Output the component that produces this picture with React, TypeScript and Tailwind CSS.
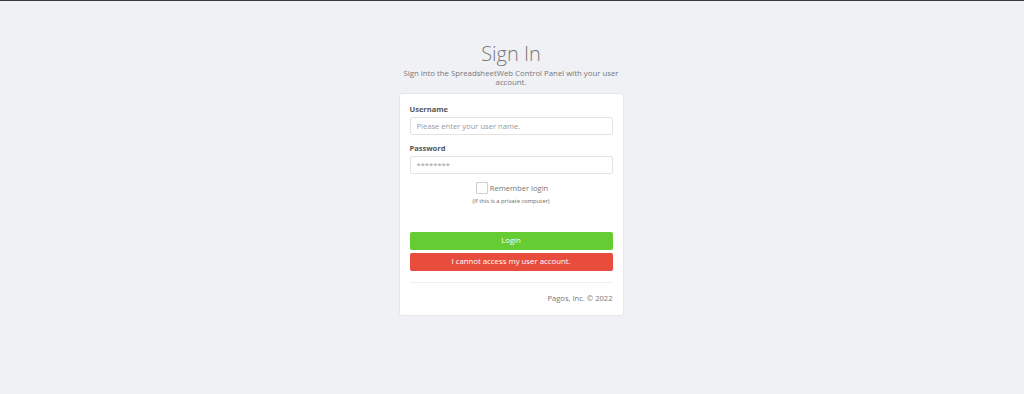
import React from "react";

export default function App() {
  return (
    <div
      className="w-full h-[394px] bg-[#f0f1f5] border-t border-[#3a3a3e] flex flex-col items-center"
      style={{ fontFamily: '"Open Sans", sans-serif' }}
    >
      <div className="w-[226px] mt-[41px] mr-[2px] flex flex-col items-center">
        <h1 className="text-[20px] leading-[24px] font-light text-[#777]">Sign In</h1>
        <p className="mt-[3px] text-[7.8px] leading-[9px] text-[#777] text-center">
          Sign into the SpreadsheetWeb Control Panel with your user account.
        </p>
        <div className="mt-[6px] w-[225px] bg-white border border-[#e4e6ea] rounded-[3px] px-[10px] pt-[10px] pb-[12px]">
          <label className="block text-[7.5px] leading-[10px] font-bold text-[#555]">Username</label>
          <input
            className="mt-[3px] block w-full h-[18px] border border-[#e3e3e3] rounded-[2px] px-[6px] text-[7.6px] text-[#555] placeholder:text-[#999] outline-none"
            placeholder="Please enter your user name."
          />
          <label className="block mt-[8px] text-[7.5px] leading-[10px] font-bold text-[#555]">Password</label>
          <input
            type="password"
            className="mt-[3px] block w-full h-[18px] border border-[#e3e3e3] rounded-[2px] px-[6px] text-[7.6px] text-[#555] placeholder:text-[#999] outline-none"
            placeholder="********"
          />
          <div className="mt-[8px] flex items-center justify-center gap-[2px] pl-[2px]">
            <span className="w-[12px] h-[12px] border border-[#cfcfcf] rounded-[1px] bg-white" />
            <span className="text-[7.6px] leading-[10px] text-[#777]">Remember login</span>
          </div>
          <div className="mt-[3px] text-center text-[5.8px] leading-[8px] text-[#666]">
            (If this is a private computer)
          </div>
          <button className="mt-[27px] w-full h-[18px] bg-[#66cc33] rounded-[2px] text-white text-[7.8px] flex items-center justify-center">
            Login
          </button>
          <button className="mt-[3px] w-full h-[18px] bg-[#e74c3c] rounded-[2px] text-white text-[7.8px] flex items-center justify-center">
            I cannot access my user account.
          </button>
          <div className="mt-[11px] border-t border-[#eeeeee]" />
          <div className="mt-[10px] text-right text-[7.6px] leading-[10px] text-[#777]">
            Pagos, Inc. © 2022
          </div>
        </div>
      </div>
    </div>
  );
}
